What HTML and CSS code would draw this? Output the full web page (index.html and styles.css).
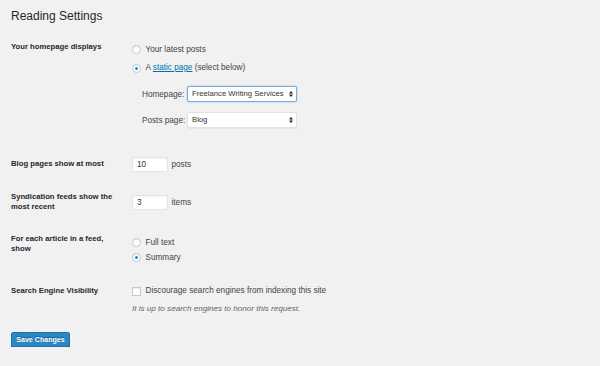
FILE: index.html
```html
<!DOCTYPE html>
<html>
<head>
<meta charset="utf-8">
<title>Reading Settings</title>
<link rel="stylesheet" href="styles.css">
</head>
<body>
<div class="wrap">
  <h1 class="title">Reading Settings</h1>

  <div class="row row-home">
    <div class="label">Your homepage displays</div>
    <div class="field">
      <div class="choice line-a"><span class="radio"></span><span>Your latest posts</span></div>
      <div class="choice line-b"><span class="radio checked"></span><span>A <a href="#" class="link">static page</a> (select below)</span></div>
      <div class="pages">
        <div class="page-row">
          <span class="page-label">Homepage:</span>
          <div class="select focused"><span class="select-text">Freelance Writing Services</span>
            <svg class="arrows" width="4" height="6" viewBox="0 0 4 6"><path d="M0 2.4 L2 0 L4 2.4 Z M0 3.6 L2 6 L4 3.6 Z" fill="#222"/></svg>
          </div>
        </div>
        <div class="page-row second">
          <span class="page-label">Posts page:</span>
          <div class="select"><span class="select-text">Blog</span>
            <svg class="arrows" width="4" height="6" viewBox="0 0 4 6"><path d="M0 2.4 L2 0 L4 2.4 Z M0 3.6 L2 6 L4 3.6 Z" fill="#222"/></svg>
          </div>
        </div>
      </div>
    </div>
  </div>

  <div class="row row-center row-blog">
    <div class="label">Blog pages show at most</div>
    <div class="field inline"><span class="num">10</span><span class="unit">posts</span></div>
  </div>

  <div class="row row-center row-synd">
    <div class="label">Syndication feeds show the most recent</div>
    <div class="field inline"><span class="num">3</span><span class="unit">items</span></div>
  </div>

  <div class="row row-feed">
    <div class="label">For each article in a feed, show</div>
    <div class="field feed-field">
      <div class="choice short"><span class="radio"></span><span>Full text</span></div>
      <div class="choice short"><span class="radio checked"></span><span>Summary</span></div>
    </div>
  </div>

  <div class="row row-search">
    <div class="label label-search">Search Engine Visibility</div>
    <div class="field">
      <div class="choice short"><span class="checkbox"></span><span>Discourage search engines from indexing this site</span></div>
      <p class="desc">It is up to search engines to honor this request.</p>
    </div>
  </div>

  <button class="button-primary" type="button">Save Changes</button>
</div>
</body>
</html>
```

FILE: styles.css
```css
* { box-sizing: border-box; }

html, body {
  margin: 0;
  padding: 0;
  background: #f1f1f1;
}

body {
  font-family: "Liberation Sans", Arial, Helvetica, sans-serif;
  color: #23282d;
  font-size: 8.2px;
}

.wrap {
  padding: 9px 0 0 11px;
}

.title {
  margin: 0;
  font-size: 12px;
  line-height: 15px;
  font-weight: 400;
  color: #23282d;
}

.row {
  display: flex;
}

.label {
  width: 121px;
  flex: none;
  font-weight: 700;
  font-size: 7.7px;
  line-height: 10.4px;
  padding-right: 8px;
  color: #23282d;
}

.field {
  color: #444;
}

.row-home {
  margin-top: 16px;
}
.row-home .label {
  padding-top: 1.8px;
}

.choice {
  display: flex;
  align-items: center;
  gap: 4.5px;
  line-height: 10px;
}
.line-a { height: 19px; }
.line-b { height: 18px; }
.short { height: 15px; }

.radio {
  width: 9px;
  height: 9px;
  flex: none;
  border-radius: 50%;
  border: 1px solid #c3c6ca;
  background: #fff;
  box-shadow: inset 0 1px 1px rgba(0,0,0,.08);
  display: flex;
  align-items: center;
  justify-content: center;
}
.radio.checked::after {
  content: "";
  width: 3px;
  height: 3px;
  border-radius: 50%;
  background: #1e8cbe;
}

.checkbox {
  width: 9px;
  height: 9px;
  flex: none;
  border: 1px solid #c3c6ca;
  background: #fff;
  box-shadow: inset 0 1px 1px rgba(0,0,0,.08);
}

.link {
  color: #0073aa;
  text-decoration: underline;
}

.pages {
  margin-top: 9px;
  padding-left: 10px;
}

.page-row {
  display: flex;
  align-items: center;
}
.page-row.second {
  margin-top: 10px;
}

.page-label {
  width: 45px;
  flex: none;
  white-space: nowrap;
}

.select {
  width: 110px;
  height: 16px;
  display: flex;
  align-items: center;
  justify-content: space-between;
  gap: 2px;
  padding: 0 3px 0 4px;
  background: #fff;
  border: 1px solid #e2e2e2;
  border-radius: 2px;
  box-shadow: 0 1px 1px rgba(0,0,0,.05);
  color: #333;
  white-space: nowrap;
}
.select-text {
  font-size: 7.7px;
  line-height: 10px;
}
.select.focused {
  border-color: #7eaee0;
  box-shadow: 0 0 1.5px rgba(30,140,190,.7);
}

.arrows {
  display: block;
  flex: none;
}

.row-center {
  align-items: center;
}

.row-blog {
  margin-top: 29px;
}
.row-synd {
  margin-top: 19.6px;
}

.inline {
  display: flex;
  align-items: center;
}

.num {
  width: 36px;
  height: 15px;
  display: flex;
  align-items: center;
  padding-left: 4px;
  background: #fff;
  border: 1px solid #e4e4e4;
  box-shadow: inset 0 1px 2px rgba(0,0,0,.05);
  color: #333;
}

.unit {
  margin-left: 3.5px;
}

.row-feed {
  margin-top: 21.6px;
}
.feed-field {
  margin-top: 1px;
}

.row-search {
  margin-top: 18.5px;
}
.label-search {
  padding-top: 2.3px;
}

.desc {
  margin: 3px 0 0;
  font-style: italic;
  font-size: 8.1px;
  line-height: 13px;
  color: #666;
}

.button-primary {
  display: block;
  margin-top: 17.5px;
  width: 59px;
  height: 15px;
  padding: 0;
  font-family: "Liberation Sans", Arial, sans-serif;
  font-size: 7.1px;
  font-weight: 700;
  color: #fff;
  background: #2b87c3;
  border: 1px solid #1f72a8;
  border-radius: 2px;
  box-shadow: 0 1px 0 #1f6a9c;
  text-shadow: 0 -1px 1px rgba(0,60,100,.6);
}
```
